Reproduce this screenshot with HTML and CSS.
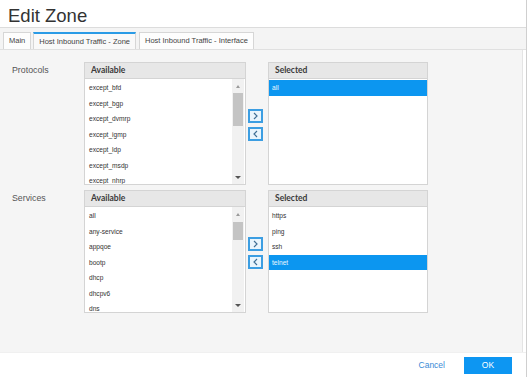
FILE: index.html
```html
<!DOCTYPE html>
<html>
<head>
<meta charset="utf-8">
<link rel="stylesheet" href="styles.css">
</head>
<body>
<div class="dialog">
  <div class="title">Edit Zone</div>
  <div class="tabbar">
    <div class="tab">Main</div>
    <div class="tab active">Host Inbound Traffic - Zone</div>
    <div class="tab">Host Inbound Traffic - Interface</div>
  </div>
  <div class="content">
    <div class="row">
      <div class="label">Protocols</div>
      <div class="box avail">
        <div class="head">Available</div>
        <div class="list">
          <div class="items">
            <div class="item">except_bfd</div>
            <div class="item">except_bgp</div>
            <div class="item">except_dvmrp</div>
            <div class="item">except_igmp</div>
            <div class="item">except_ldp</div>
            <div class="item">except_msdp</div>
            <div class="item">except_nhrp</div>
          </div>
          <div class="scroll">
            <div class="up"></div>
            <div class="thumb t1"></div>
            <div class="spacer"></div>
            <div class="down"></div>
          </div>
        </div>
      </div>
      <div class="moves">
        <div class="mv"><svg width="7" height="8" viewBox="0 0 7 8"><polyline points="2,1 5,4 2,7" fill="none" stroke="#3f6f95" stroke-width="1.2"/></svg></div>
        <div class="mv"><svg width="7" height="8" viewBox="0 0 7 8"><polyline points="5,1 2,4 5,7" fill="none" stroke="#3f6f95" stroke-width="1.2"/></svg></div>
      </div>
      <div class="box sel">
        <div class="head">Selected</div>
        <div class="list">
          <div class="items">
            <div class="item on">all</div>
          </div>
        </div>
      </div>
    </div>
    <div class="row">
      <div class="label">Services</div>
      <div class="box avail">
        <div class="head">Available</div>
        <div class="list">
          <div class="items">
            <div class="item">all</div>
            <div class="item">any-service</div>
            <div class="item">appqoe</div>
            <div class="item">bootp</div>
            <div class="item">dhcp</div>
            <div class="item">dhcpv6</div>
            <div class="item">dns</div>
          </div>
          <div class="scroll">
            <div class="up"></div>
            <div class="thumb t2"></div>
            <div class="spacer"></div>
            <div class="down"></div>
          </div>
        </div>
      </div>
      <div class="moves">
        <div class="mv"><svg width="7" height="8" viewBox="0 0 7 8"><polyline points="2,1 5,4 2,7" fill="none" stroke="#3f6f95" stroke-width="1.2"/></svg></div>
        <div class="mv"><svg width="7" height="8" viewBox="0 0 7 8"><polyline points="5,1 2,4 5,7" fill="none" stroke="#3f6f95" stroke-width="1.2"/></svg></div>
      </div>
      <div class="box sel">
        <div class="head">Selected</div>
        <div class="list">
          <div class="items">
            <div class="item">https</div>
            <div class="item">ping</div>
            <div class="item">ssh</div>
            <div class="item on">telnet</div>
          </div>
        </div>
      </div>
    </div>
  </div>
  <div class="footer">
    <div class="cancel">Cancel</div>
    <div class="ok">OK</div>
  </div>
</div>
</body>
</html>
```
FILE: styles.css
```css
html, body {
  margin: 0;
  padding: 0;
  background: #ffffff;
}
body {
  width: 529px;
  height: 377px;
  overflow: hidden;
  font-family: "Liberation Sans", Arial, sans-serif;
  color: #333;
}
.dialog {
  width: 526px;
  height: 377px;
  border-right: 1px solid #cfcfcf;
  display: flex;
  flex-direction: column;
  background: #fff;
}
.title {
  height: 22px;
  padding-top: 5px;
  padding-left: 8px;
  font-size: 18.5px;
  line-height: 21px;
  color: #333;
  border-bottom: 1px solid #dcdcdc;
  box-sizing: content-box;
}
.tabbar {
  height: 17px;
  padding-top: 4px;
  padding-left: 3px;
  background: #f4f4f4;
  border-bottom: 1px solid #e0e0e0;
  display: flex;
  gap: 2px;
}
.tab {
  height: 16px;
  padding: 0 5px;
  border: 1px solid #d6d6d6;
  border-bottom: none;
  background: #fdfdfd;
  font-size: 7.5px;
  line-height: 16px;
  color: #444;
  white-space: nowrap;
}
.tab.active {
  border-top: 2px solid #2a9be6;
  height: 15px;
  background: #f9f9f9;
  margin-right: 1px;
}
.content {
  flex: 1;
  background: #f5f5f5;
  padding: 12px 0 0 12px;
  display: flex;
  flex-direction: column;
  gap: 5px;
  border-right: 1px solid #e4e4e4;
  margin-right: 3px;
}
.row {
  display: flex;
  align-items: stretch;
}
.label {
  width: 72px;
  font-size: 8.8px;
  line-height: 16px;
  color: #555;
}
.box {
  display: flex;
  flex-direction: column;
  border: 1px solid #d4d4d4;
  background: #fff;
}
.box.avail { width: 160px; }
.box.sel { width: 158px; }
.head {
  height: 15px;
  background: #e7e7e7;
  border-bottom: 1px solid #d4d4d4;
  padding-left: 6px;
  font-family: "Lato", "Liberation Sans", sans-serif;
  font-weight: 700;
  font-size: 8.5px;
  line-height: 15px;
  color: #3a3a3a;
}
.list {
  height: 105px;
  display: flex;
  background: #fff;
  overflow: hidden;
}
.items {
  flex: 1;
  padding-top: 1px;
}
.item {
  height: 15.5px;
  line-height: 15.5px;
  padding-left: 4px;
  font-size: 6.6px;
  color: #333;
}
.sel .item { padding-left: 3px; }
.item.on {
  background: #0c96f0;
  color: #e8f6ff;
}
.scroll {
  width: 12px;
  margin-right: 1px;
  background: #f1f1f1;
  display: flex;
  flex-direction: column;
  align-items: center;
}
.up {
  margin-top: 6px;
  width: 0;
  height: 0;
  border-left: 2.5px solid transparent;
  border-right: 2.5px solid transparent;
  border-bottom: 3px solid #9a9a9a;
}
.down {
  margin-bottom: 5px;
  width: 0;
  height: 0;
  border-left: 3px solid transparent;
  border-right: 3px solid transparent;
  border-top: 3px solid #555;
}
.thumb {
  width: 10px;
  background: #c4c4c4;
}
.t1 { margin-top: 5px; height: 33px; }
.t2 { margin-top: 6px; height: 18px; }
.spacer { flex: 1; }
.moves {
  width: 22px;
  display: flex;
  flex-direction: column;
  justify-content: center;
  gap: 4px;
  padding-left: 2px;
  padding-top: 2px;
  box-sizing: border-box;
}
.mv {
  width: 11px;
  height: 10px;
  border: 2px solid #3c9ee2;
  background: #e9f5fd;
  display: flex;
  align-items: center;
  justify-content: center;
}
.footer {
  height: 25px;
  display: flex;
  justify-content: flex-end;
  align-items: center;
  padding-right: 14px;
  background: #fff;
  border-top: 1px solid #f0f0f0;
  box-sizing: border-box;
}
.cancel {
  font-size: 8.5px;
  color: #3a8bd6;
  margin-right: 19px;
}
.ok {
  width: 48px;
  height: 17px;
  background: #0d96f2;
  color: #fff;
  font-size: 8.5px;
  line-height: 17px;
  text-align: center;
}
```
